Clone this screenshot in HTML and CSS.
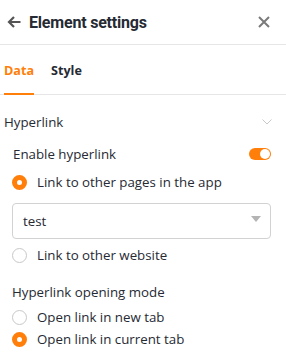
FILE: index.html
```html
<!DOCTYPE html>
<html lang="en">
<head>
    <meta charset="UTF-8">
    <title>Element settings</title>
    <link rel="stylesheet" href="styles.css">
</head>
<body>
    <header class="header">
        <svg class="back" width="14" height="12" viewBox="0 0 14 12">
            <path d="M13.5 6H2.5M7 1L2 6l5 5" fill="none" stroke="#555" stroke-width="2.2"/>
        </svg>
        <h1 class="title">Element settings</h1>
        <svg class="close" width="12" height="12" viewBox="0 0 12 12">
            <path d="M1 1l10 10M11 1L1 11" stroke="#7a7a7a" stroke-width="2"/>
        </svg>
    </header>

    <nav class="tabs">
        <span class="tab active">Data</span>
        <span class="tab">Style</span>
    </nav>

    <section class="group">
        <div class="group-head">
            <span>Hyperlink</span>
            <svg width="10" height="6" viewBox="0 0 10 6">
                <path d="M0.5 0.5L5 5l4.5-4.5" fill="none" stroke="#c8c8c8" stroke-width="1"/>
            </svg>
        </div>

        <div class="group-body">
            <div class="row between">
                <span>Enable hyperlink</span>
                <span class="toggle"></span>
            </div>
            <label class="radio first"><span class="dot checked"></span>Link to other pages in the app</label>
            <div class="select">
                <span>test</span>
                <span class="caret"></span>
            </div>
            <label class="radio"><span class="dot"></span>Link to other website</label>

            <div class="sub-title">Hyperlink opening mode</div>
            <label class="radio"><span class="dot"></span>Open link in new tab</label>
            <label class="radio"><span class="dot checked"></span>Open link in current tab</label>
        </div>
    </section>
</body>
</html>
```

FILE: styles.css
```css
:root {
    --orange: #ff7f0a;
    --text: #262a33;
    --line: #e6e6e6;
}

body {
    margin: 0;
    font-family: "Open Sans", sans-serif;
    font-size: 13.3px;
    color: var(--text);
    background: #fff;
}

.header {
    height: 44px;
    display: flex;
    align-items: center;
    padding: 0 16px 0 7px;
    border-bottom: 1px solid var(--line);
}

.back {
    margin-right: 8px;
}

.title {
    flex: 1;
    margin: 0;
    font-family: Roboto, sans-serif;
    font-size: 16px;
    font-weight: 700;
    letter-spacing: -0.2px;
}

.tabs {
    height: 49px;
    display: flex;
    gap: 17px;
    padding: 0 4px;
    border-bottom: 1px solid var(--line);
}

.tab {
    display: flex;
    align-items: center;
    font-size: 12.6px;
    font-weight: 700;
    box-sizing: border-box;
    padding-top: 2px;
}

.tab.active {
    color: var(--orange);
    border-bottom: 2px solid var(--orange);
    margin-bottom: -1px;
}

.group-head {
    height: 42px;
    padding: 6px 14px 0 4px;
    display: flex;
    align-items: center;
    justify-content: space-between;
}

.group-body {
    padding: 0 15px 0 12px;
}

.row {
    display: flex;
    align-items: center;
    height: 22px;
}

.between {
    justify-content: space-between;
    padding-left: 1px;
}

.toggle {
    width: 22px;
    height: 12px;
    border-radius: 6px;
    background: var(--orange);
    position: relative;
}

.toggle::after {
    content: "";
    position: absolute;
    right: 1px;
    top: 1px;
    width: 10px;
    height: 10px;
    border-radius: 50%;
    background: #fff;
}

.radio {
    display: flex;
    align-items: center;
    height: 22px;
}

.radio.first {
    margin-top: 6px;
}

.dot {
    width: 15px;
    height: 15px;
    border: 1px solid #c8c8c8;
    border-radius: 50%;
    margin-right: 10px;
    box-sizing: border-box;
}

.dot.checked {
    border: 5px solid var(--orange);
}

.select {
    height: 36px;
    margin: 10px 0 5px;
    border: 1px solid #d2d2d2;
    border-radius: 4px;
    display: flex;
    align-items: center;
    justify-content: space-between;
    padding: 0 9px 0 10px;
    box-sizing: border-box;
}

.caret {
    width: 0;
    height: 0;
    border-left: 5px solid transparent;
    border-right: 5px solid transparent;
    border-top: 6px solid #b4b4b4;
    margin-bottom: 4px;
}

.sub-title {
    margin-top: 15px;
    margin-bottom: 3px;
    height: 22px;
    display: flex;
    align-items: center;
}
```
